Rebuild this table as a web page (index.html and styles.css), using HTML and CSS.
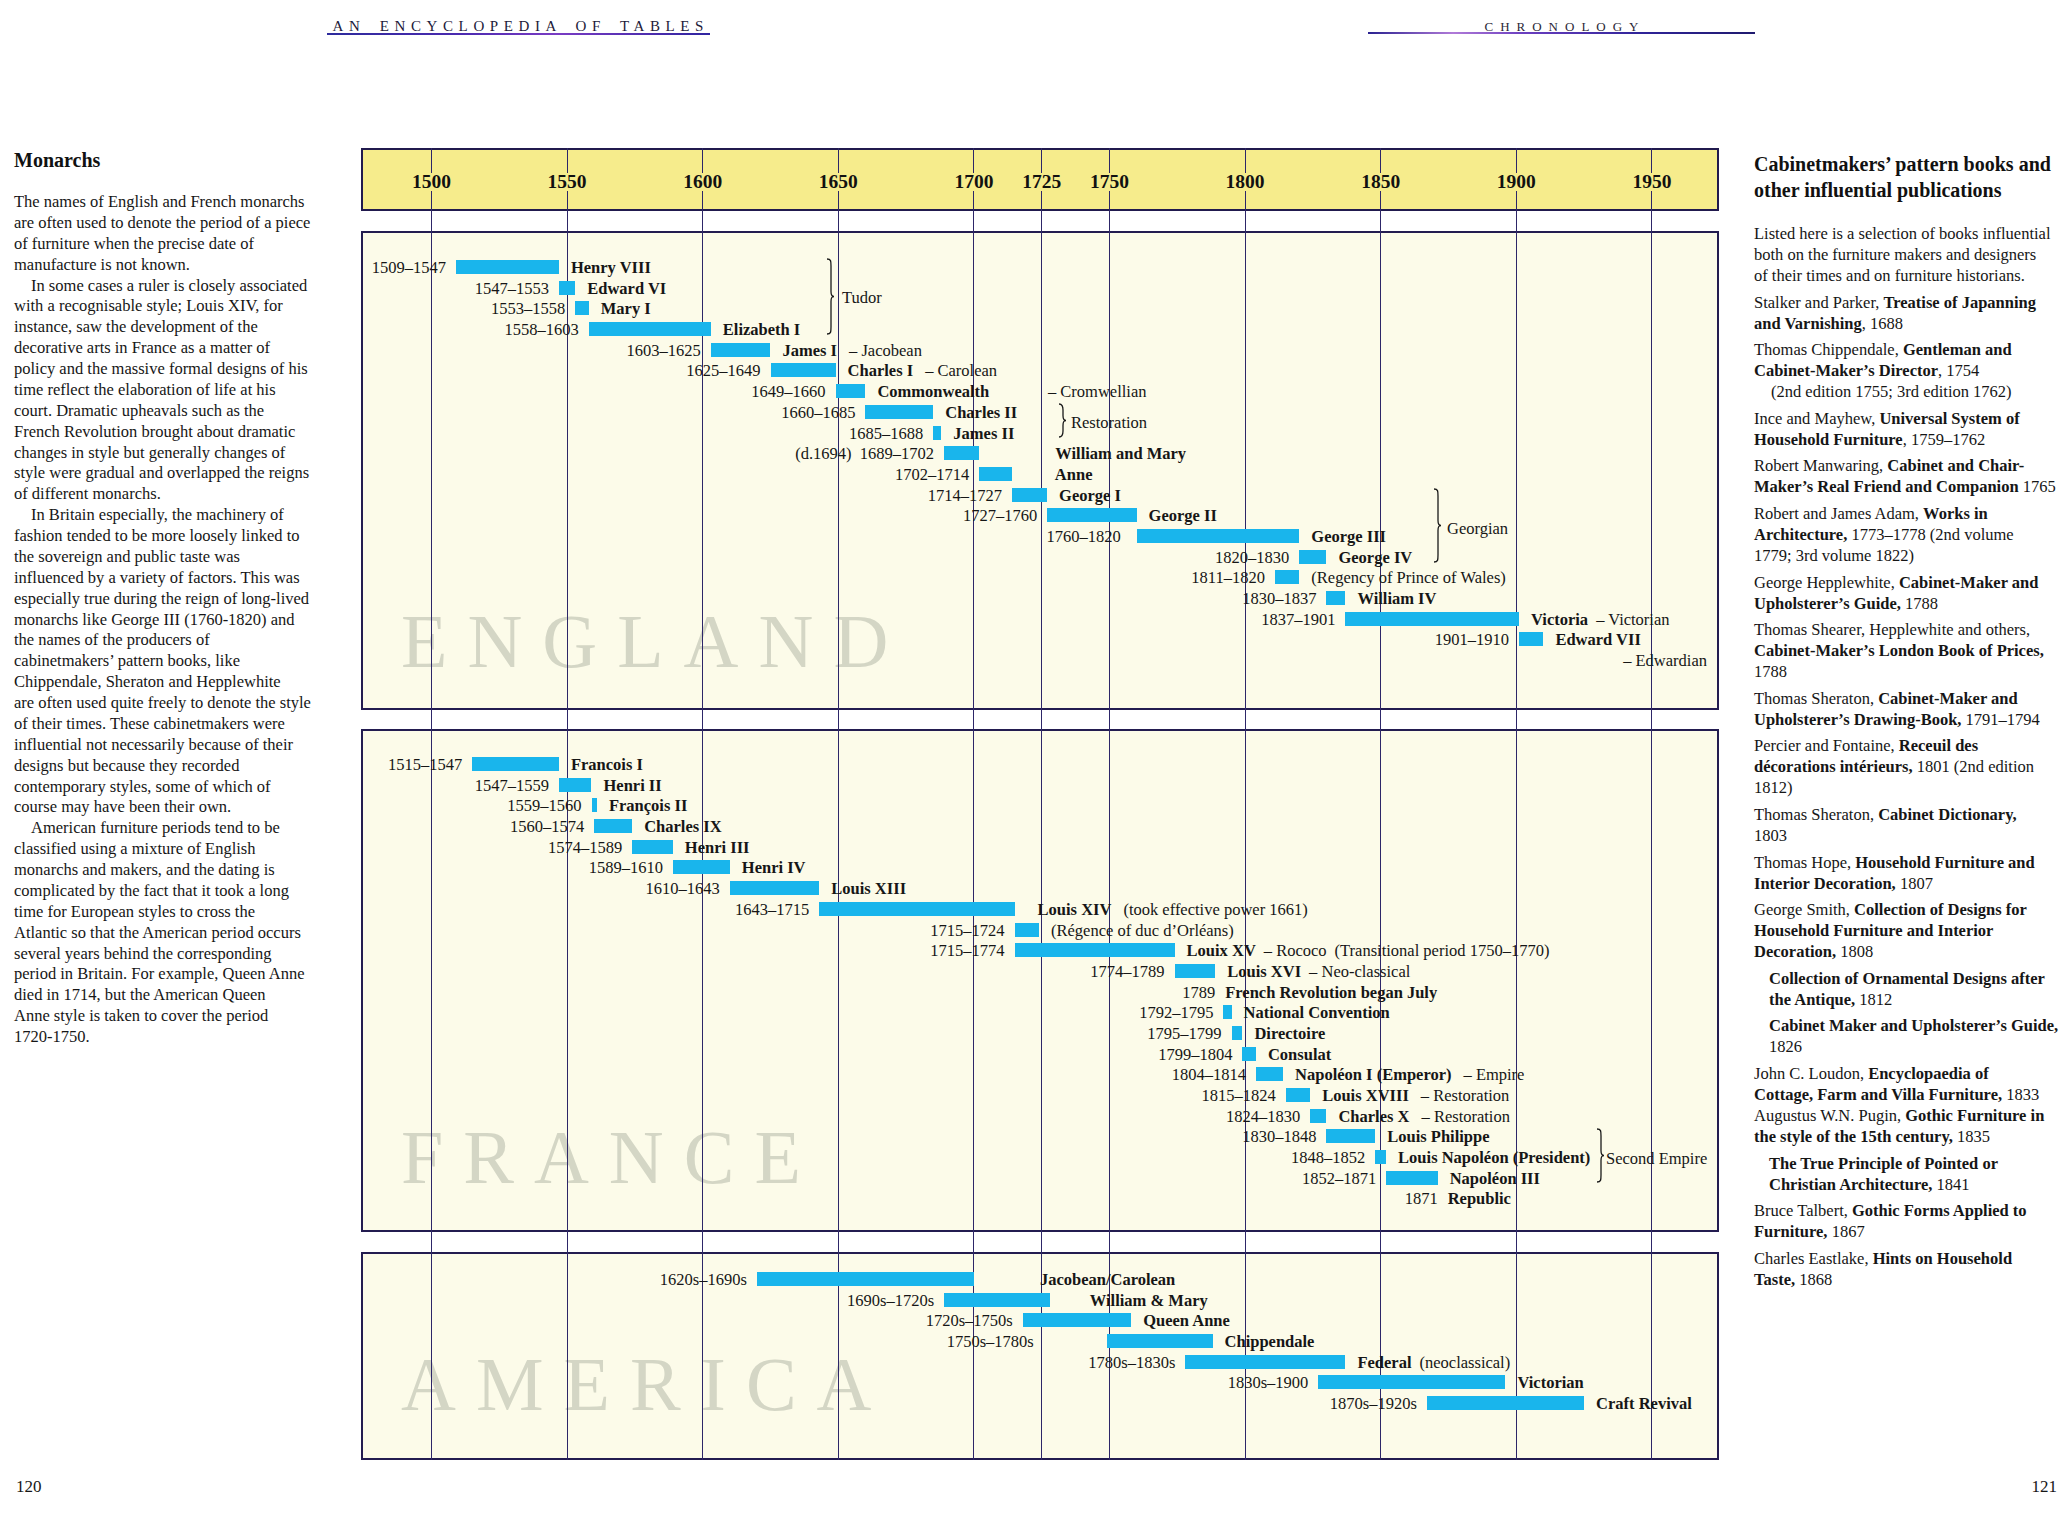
FILE: index.html
```html
<!DOCTYPE html>
<html lang="en">
<head>
<meta charset="utf-8">
<title>An Encyclopedia of Tables – Chronology</title>
<link rel="stylesheet" href="styles.css">
</head>
<body>
<div class="page">
  <header class="running-heads">
    <div class="running-head">
      <span class="running-title">AN ENCYCLOPEDIA OF TABLES</span>
    </div>
    <div class="running-head running-head-right">
      <span class="running-title running-title-right">CHRONOLOGY</span>
    </div>
  </header>

  <main class="spread">
    <aside class="side side-left">
      <h2 class="side-title">Monarchs</h2>
      <div class="side-body">
        <p>The names of English and French monarchs<br>are often used to denote the period of a piece<br>of furniture when the precise date of<br>manufacture is not known.</p>
        <p>In some cases a ruler is closely associated<br>with a recognisable style; Louis XIV, for<br>instance, saw the development of the<br>decorative arts in France as a matter of<br>policy and the massive formal designs of his<br>time reflect the elaboration of life at his<br>court. Dramatic upheavals such as the<br>French Revolution brought about dramatic<br>changes in style but generally changes of<br>style were gradual and overlapped the reigns<br>of different monarchs.</p>
        <p>In Britain especially, the machinery of<br>fashion tended to be more loosely linked to<br>the sovereign and public taste was<br>influenced by a variety of factors. This was<br>especially true during the reign of long-lived<br>monarchs like George III (1760-1820) and<br>the names of the producers of<br>cabinetmakers’ pattern books, like<br>Chippendale, Sheraton and Hepplewhite<br>are often used quite freely to denote the style<br>of their times. These cabinetmakers were<br>influential not necessarily because of their<br>designs but because they recorded<br>contemporary styles, some of which of<br>course may have been their own.</p>
        <p>American furniture periods tend to be<br>classified using a mixture of English<br>monarchs and makers, and the dating is<br>complicated by the fact that it took a long<br>time for European styles to cross the<br>Atlantic so that the American period occurs<br>several years behind the corresponding<br>period in Britain. For example, Queen Anne<br>died in 1714, but the American Queen<br>Anne style is taken to cover the period<br>1720-1750.</p>
      </div>
    </aside>

    <div class="chart">
      <div class="grid" aria-hidden="true">
        <span class="gridline" style="--y:1500"></span>
        <span class="gridline" style="--y:1550"></span>
        <span class="gridline" style="--y:1600"></span>
        <span class="gridline" style="--y:1650"></span>
        <span class="gridline" style="--y:1700"></span>
        <span class="gridline" style="--y:1725"></span>
        <span class="gridline" style="--y:1750"></span>
        <span class="gridline" style="--y:1800"></span>
        <span class="gridline" style="--y:1850"></span>
        <span class="gridline" style="--y:1900"></span>
        <span class="gridline" style="--y:1950"></span>
      </div>

      <div class="axis">
        <span class="axis-label" style="--y:1500">1500</span>
        <span class="axis-label" style="--y:1550">1550</span>
        <span class="axis-label" style="--y:1600">1600</span>
        <span class="axis-label" style="--y:1650">1650</span>
        <span class="axis-label" style="--y:1700">1700</span>
        <span class="axis-label" style="--y:1725">1725</span>
        <span class="axis-label" style="--y:1750">1750</span>
        <span class="axis-label" style="--y:1800">1800</span>
        <span class="axis-label" style="--y:1850">1850</span>
        <span class="axis-label" style="--y:1900">1900</span>
        <span class="axis-label" style="--y:1950">1950</span>
      </div>

      <section class="region region-england">
        <div class="watermark">ENGLAND</div>
        <svg class="brace brace-tudor" width="9" height="77" viewBox="0 0 9 77"><path d="M1,1 C5,1 5,3 5,8 L5,33.5 C5,37.5 6,38.5 8,38.5 C6,38.5 5,39.5 5,43.5 L5,69 C5,74 5,76 1,76"/></svg>
        <span class="group-label label-tudor">Tudor</span>
        <svg class="brace brace-restoration" width="9" height="35" viewBox="0 0 9 35"><path d="M1,1 C4,1 5,3 5,7 L5,12.5 C5,16.5 6,17.5 8,17.5 C6,17.5 5,18.5 5,22.5 L5,28 C5,32 4,34 1,34"/></svg>
        <span class="group-label label-restoration">Restoration</span>
        <svg class="brace brace-georgian" width="9" height="75" viewBox="0 0 9 75"><path d="M1,1 C5,1 5,3 5,8 L5,32.5 C5,36.5 6,37.5 8,37.5 C6,37.5 5,38.5 5,42.5 L5,67 C5,72 5,74 1,74"/></svg>
        <span class="group-label label-georgian">Georgian</span>

        <div class="row" style="--s:1509;--e:1547"><span class="date">1509–1547</span><span class="bar"></span><span class="name">Henry VIII</span></div>
        <div class="row" style="--s:1547;--e:1553"><span class="date">1547–1553</span><span class="bar"></span><span class="name">Edward VI</span></div>
        <div class="row" style="--s:1553;--e:1558"><span class="date">1553–1558</span><span class="bar"></span><span class="name">Mary I</span></div>
        <div class="row" style="--s:1558;--e:1603"><span class="date">1558–1603</span><span class="bar"></span><span class="name">Elizabeth I</span></div>
        <div class="row" style="--s:1603;--e:1625"><span class="date">1603–1625</span><span class="bar"></span><span class="name">James I<span class="note">– Jacobean</span></span></div>
        <div class="row" style="--s:1625;--e:1649"><span class="date">1625–1649</span><span class="bar"></span><span class="name">Charles I<span class="note">– Carolean</span></span></div>
        <div class="row" style="--s:1649;--e:1660"><span class="date">1649–1660</span><span class="bar"></span><span class="name">Commonwealth</span><span class="tag" style="--t:1727.3">– Cromwellian</span></div>
        <div class="row" style="--s:1660;--e:1685"><span class="date">1660–1685</span><span class="bar"></span><span class="name">Charles II</span></div>
        <div class="row" style="--s:1685;--e:1688"><span class="date">1685–1688</span><span class="bar"></span><span class="name">James II</span></div>
        <div class="row" style="--s:1689;--e:1702;--ng:76px"><span class="date">(d.1694)&nbsp; 1689–1702</span><span class="bar"></span><span class="name">William and Mary</span></div>
        <div class="row" style="--s:1702;--e:1714;--ng:43px"><span class="date">1702–1714</span><span class="bar"></span><span class="name">Anne</span></div>
        <div class="row" style="--s:1714;--e:1727"><span class="date">1714–1727</span><span class="bar"></span><span class="name">George I</span></div>
        <div class="row" style="--s:1727;--e:1760"><span class="date">1727–1760</span><span class="bar"></span><span class="name">George II</span></div>
        <div class="row" style="--s:1760;--e:1820;--dg:16px"><span class="date">1760–1820</span><span class="bar"></span><span class="name">George III</span></div>
        <div class="row" style="--s:1820;--e:1830"><span class="date">1820–1830</span><span class="bar"></span><span class="name">George IV</span></div>
        <div class="row" style="--s:1811;--e:1820"><span class="date">1811–1820</span><span class="bar"></span><span class="name plain">(Regency of Prince of Wales)</span></div>
        <div class="row" style="--s:1830;--e:1837"><span class="date">1830–1837</span><span class="bar"></span><span class="name">William IV</span></div>
        <div class="row" style="--s:1837;--e:1901"><span class="date">1837–1901</span><span class="bar"></span><span class="name">Victoria<span class="note note-tight">– Victorian</span></span></div>
        <div class="row" style="--s:1901;--e:1910"><span class="date">1901–1910</span><span class="bar"></span><span class="name">Edward VII</span></div>
        <div class="row"><span class="tag tag-end">– Edwardian</span></div>
      </section>

      <section class="region region-france">
        <div class="watermark">FRANCE</div>
        <svg class="brace brace-empire" width="9" height="55" viewBox="0 0 9 55"><path d="M1,1 C5,1 5,3 5,8 L5,22.5 C5,26.5 6,27.5 8,27.5 C6,27.5 5,28.5 5,32.5 L5,47 C5,52 5,54 1,54"/></svg>
        <span class="group-label label-empire">Second Empire</span>

        <div class="row" style="--s:1515;--e:1547"><span class="date">1515–1547</span><span class="bar"></span><span class="name">Francois I</span></div>
        <div class="row" style="--s:1547;--e:1559"><span class="date">1547–1559</span><span class="bar"></span><span class="name">Henri II</span></div>
        <div class="row" style="--s:1559;--e:1561"><span class="date">1559–1560</span><span class="bar"></span><span class="name">François II</span></div>
        <div class="row" style="--s:1560;--e:1574"><span class="date">1560–1574</span><span class="bar"></span><span class="name">Charles IX</span></div>
        <div class="row" style="--s:1574;--e:1589"><span class="date">1574–1589</span><span class="bar"></span><span class="name">Henri III</span></div>
        <div class="row" style="--s:1589;--e:1610"><span class="date">1589–1610</span><span class="bar"></span><span class="name">Henri IV</span></div>
        <div class="row" style="--s:1610;--e:1643"><span class="date">1610–1643</span><span class="bar"></span><span class="name">Louis XIII</span></div>
        <div class="row" style="--s:1643;--e:1715;--ng:23px"><span class="date">1643–1715</span><span class="bar"></span><span class="name">Louis XIV<span class="note">(took effective power 1661)</span></span></div>
        <div class="row" style="--s:1715;--e:1724"><span class="date">1715–1724</span><span class="bar"></span><span class="name plain">(Régence of duc d’Orléans)</span></div>
        <div class="row" style="--s:1715;--e:1774"><span class="date">1715–1774</span><span class="bar"></span><span class="name">Louix XV<span class="note note-tight">– Rococo</span><span class="note note-tight">(Transitional period 1750–1770)</span></span></div>
        <div class="row" style="--s:1774;--e:1789"><span class="date">1774–1789</span><span class="bar"></span><span class="name">Louis XVI<span class="note note-tight">– Neo-classical</span></span></div>
        <div class="row point" style="--s:1789;--e:1789"><span class="date">1789</span><span class="name">French Revolution began July</span></div>
        <div class="row" style="--s:1792;--e:1795"><span class="date">1792–1795</span><span class="bar"></span><span class="name">National Convention</span></div>
        <div class="row" style="--s:1795;--e:1799"><span class="date">1795–1799</span><span class="bar"></span><span class="name">Directoire</span></div>
        <div class="row" style="--s:1799;--e:1804"><span class="date">1799–1804</span><span class="bar"></span><span class="name">Consulat</span></div>
        <div class="row" style="--s:1804;--e:1814"><span class="date">1804–1814</span><span class="bar"></span><span class="name">Napoléon I (Emperor)<span class="note">– Empire</span></span></div>
        <div class="row" style="--s:1815;--e:1824"><span class="date">1815–1824</span><span class="bar"></span><span class="name">Louis XVIII<span class="note">– Restoration</span></span></div>
        <div class="row" style="--s:1824;--e:1830"><span class="date">1824–1830</span><span class="bar"></span><span class="name">Charles X<span class="note">– Restoration</span></span></div>
        <div class="row" style="--s:1830;--e:1848"><span class="date">1830–1848</span><span class="bar"></span><span class="name">Louis Philippe</span></div>
        <div class="row" style="--s:1848;--e:1852"><span class="date">1848–1852</span><span class="bar"></span><span class="name">Louis Napoléon (President)</span></div>
        <div class="row" style="--s:1852;--e:1871"><span class="date">1852–1871</span><span class="bar"></span><span class="name">Napoléon III</span></div>
        <div class="row point" style="--s:1871;--e:1871"><span class="date">1871</span><span class="name">Republic</span></div>
      </section>

      <section class="region region-america">
        <div class="watermark">AMERICA</div>
        <div class="row" style="--s:1620;--e:1700;--ng:66px"><span class="date">1620s–1690s</span><span class="bar"></span><span class="name">Jacobean/Carolean</span></div>
        <div class="row" style="--s:1689;--e:1728;--ng:40px"><span class="date">1690s–1720s</span><span class="bar"></span><span class="name">William &amp; Mary</span></div>
        <div class="row" style="--s:1718;--e:1758"><span class="date">1720s–1750s</span><span class="bar"></span><span class="name">Queen Anne</span></div>
        <div class="row" style="--s:1749;--e:1788;--dg:73px"><span class="date">1750s–1780s</span><span class="bar"></span><span class="name">Chippendale</span></div>
        <div class="row" style="--s:1778;--e:1837"><span class="date">1780s–1830s</span><span class="bar"></span><span class="name">Federal<span class="note note-tight">(neoclassical)</span></span></div>
        <div class="row" style="--s:1827;--e:1896"><span class="date">1830s–1900</span><span class="bar"></span><span class="name">Victorian</span></div>
        <div class="row" style="--s:1867;--e:1925"><span class="date">1870s–1920s</span><span class="bar"></span><span class="name">Craft Revival</span></div>
      </section>
    </div>

    <aside class="side side-right">
      <h2 class="side-title">Cabinetmakers’ pattern books and<br>other influential publications</h2>
      <div class="refs">
        <p>Listed here is a selection of books influential<br>both on the furniture makers and designers<br>of their times and on furniture historians.</p>
        <p>Stalker and Parker, <b>Treatise of Japanning<br>and Varnishing</b>, 1688</p>
        <p>Thomas Chippendale, <b>Gentleman and<br>Cabinet-Maker’s Director</b>, 1754<br><span class="hang">(2nd edition 1755; 3rd edition 1762)</span></p>
        <p>Ince and Mayhew, <b>Universal System of<br>Household Furniture</b>, 1759–1762</p>
        <p>Robert Manwaring, <b>Cabinet and Chair-<br>Maker’s Real Friend and Companion</b> 1765</p>
        <p>Robert and James Adam, <b>Works in<br>Architecture,</b> 1773–1778 (2nd volume<br>1779; 3rd volume 1822)</p>
        <p>George Hepplewhite, <b>Cabinet-Maker and<br>Upholsterer’s Guide,</b> 1788</p>
        <p>Thomas Shearer, Hepplewhite and others,<br><b>Cabinet-Maker’s London Book of Prices,</b><br>1788</p>
        <p>Thomas Sheraton, <b>Cabinet-Maker and<br>Upholsterer’s Drawing-Book,</b> 1791–1794</p>
        <p>Percier and Fontaine, <b>Receuil des<br>décorations intérieurs,</b> 1801 (2nd edition<br>1812)</p>
        <p>Thomas Sheraton, <b>Cabinet Dictionary,</b><br>1803</p>
        <p>Thomas Hope, <b>Household Furniture and<br>Interior Decoration,</b> 1807</p>
        <p>George Smith, <b>Collection of Designs for<br>Household Furniture and Interior<br>Decoration,</b> 1808</p>
        <p class="indent"><b>Collection of Ornamental Designs after<br>the Antique,</b> 1812</p>
        <p class="indent"><b>Cabinet Maker and Upholsterer’s Guide,</b><br>1826</p>
        <p>John C. Loudon, <b>Encyclopaedia of<br>Cottage, Farm and Villa Furniture,</b> 1833</p>
        <p class="tight">Augustus W.N. Pugin, <b>Gothic Furniture in<br>the style of the 15th century,</b> 1835</p>
        <p class="indent"><b>The True Principle of Pointed or<br>Christian Architecture,</b> 1841</p>
        <p>Bruce Talbert, <b>Gothic Forms Applied to<br>Furniture,</b> 1867</p>
        <p>Charles Eastlake, <b>Hints on Household<br>Taste,</b> 1868</p>
      </div>
    </aside>
  </main>

  <footer class="folios">
    <span class="folio">120</span>
    <span class="folio">121</span>
  </footer>
</div>
</body>
</html>
```

FILE: styles.css
```css
* { box-sizing: border-box; }

html, body {
  margin: 0;
  padding: 0;
  background: #ffffff;
}

body {
  font-family: "Liberation Serif", "Times New Roman", serif;
  color: #161616;
}

.page {
  width: 2072px;
  height: 1514px;
  overflow: hidden;
}

/* ---------- running heads ---------- */
.running-heads {
  display: grid;
  grid-template-columns: 1036px 1036px;
  height: 148px;
}

.running-head {
  display: flex;
  justify-content: center;
  align-items: flex-start;
  padding-top: 19px;
}

.running-head-right {
  padding-left: 15px;
  padding-top: 20px;
}

.running-title {
  position: relative;
  display: block;
  width: 383px;
  text-align: center;
  white-space: nowrap;
  font-size: 15px;
  line-height: 15px;
  letter-spacing: 5.6px;
  word-spacing: 5px;
  padding-left: 5.6px;
  color: #1d1a3a;
}

.running-title::after {
  content: "";
  position: absolute;
  left: 0;
  right: 0;
  bottom: -1px;
  height: 2px;
  background: linear-gradient(90deg, #2d2b9c 0%, #4b2ab0 35%, #7a3cc4 60%, #2f24a0 100%);
}

.running-title-right {
  width: 387px;
  font-size: 13px;
  line-height: 13px;
  letter-spacing: 7px;
  padding-left: 7px;
  color: #2b2838;
}

.running-title-right::after {
  bottom: -1px;
  background: linear-gradient(90deg, #2a2290 0%, #b07ad8 22%, #6b3fc0 40%, #30249a 70%, #1f1a6e 100%);
}

/* ---------- spread ---------- */
.spread {
  display: grid;
  grid-template-columns: 361px 1358px 1fr;
}

.side-title {
  margin: 0;
  font-size: 20px;
  line-height: 25px;
  font-weight: bold;
  color: #111;
}

.side-left {
  padding-left: 14px;
}

.side-body {
  margin-top: 19px;
  font-size: 16.5px;
  line-height: 20.87px;
  white-space: nowrap;
}

.side-body p {
  margin: 0;
}

.side-body p + p {
  text-indent: 17px;
}

.side-right {
  padding-left: 35px;
}

.side-right .side-title {
  margin-top: 3px;
  line-height: 26px;
}

.refs {
  margin-top: 20px;
  font-size: 16.5px;
  line-height: 21px;
  white-space: nowrap;
}

.refs p {
  margin: 5.6px 0 0;
}

.refs p:first-child {
  margin-top: 0;
}

.refs p.tight {
  margin-top: 0;
}

.refs p.indent {
  padding-left: 15px;
}

.refs .hang {
  display: inline-block;
  padding-left: 17px;
}

/* ---------- chart ---------- */
.chart {
  --k: 2.712px;
  --x0: 68.5px;
  position: relative;
  display: flex;
  flex-direction: column;
  gap: 19.5px;
}

.grid {
  position: absolute;
  inset: 0;
  z-index: 1;
  pointer-events: none;
}

.gridline {
  position: absolute;
  top: 0;
  bottom: 0;
  width: 1px;
  background: #2d2668;
  left: calc(70px + (var(--y) - 1500) * var(--k));
}

.axis {
  position: relative;
  height: 63px;
  border: 2px solid #211a4e;
  background: #f6ec8c;
}

.axis-label {
  position: absolute;
  z-index: 2;
  top: 23px;
  left: calc(var(--x0) + (var(--y) - 1500) * var(--k));
  transform: translateX(-50%);
  padding: 0 1px;
  font-size: 19.5px;
  line-height: 18px;
  font-weight: bold;
  color: #111;
  background: #f6ec8c;
}

.region {
  position: relative;
  border: 2px solid #231c50;
  background: #fcfbe9;
}

.region-england { height: 479px; padding-top: 25.5px; }
.region-france  { height: 503px; padding-top: 24px; }
.region-america { height: 208.5px; padding-top: 16.5px; }

.watermark {
  position: absolute;
  left: 38px;
  bottom: 29px;
  font-size: 76px;
  line-height: 76px;
  letter-spacing: 20px;
  color: #d4d6c5;
  white-space: nowrap;
}

.region-france .watermark { bottom: 35px; }
.region-america .watermark { bottom: 36px; }

.row {
  position: relative;
  height: 20.7px;
  font-size: 16.5px;
  line-height: 20.7px;
  white-space: nowrap;
}

.row.point {
  --dg: 0px;
  --ng: 10px;
}

.bar {
  position: absolute;
  z-index: 2;
  top: 2px;
  height: 14px;
  background: #19b5ec;
  left: calc(var(--x0) + (var(--s) - 1500) * var(--k));
  width: calc((var(--e) - var(--s)) * var(--k));
}

.date {
  position: absolute;
  z-index: 2;
  top: 0;
  right: calc(100% - var(--x0) - (var(--s) - 1500) * var(--k) + var(--dg, 10px));
}

.name {
  position: absolute;
  z-index: 2;
  top: 0;
  font-weight: bold;
  left: calc(var(--x0) + (var(--e) - 1500) * var(--k) + var(--ng, 12px));
}

.name.plain {
  font-weight: normal;
}

.note {
  font-weight: normal;
  margin-left: 12px;
}

.note-tight {
  margin-left: 8px;
}

.tag {
  position: absolute;
  z-index: 2;
  top: 0;
  left: calc(var(--x0) + (var(--t) - 1500) * var(--k));
}

.tag-end {
  left: auto;
  right: 10px;
}

.brace {
  position: absolute;
  z-index: 2;
  overflow: visible;
}

.brace path {
  fill: none;
  stroke: #1a1a1a;
  stroke-width: 1.3;
}

.brace-tudor       { left: 463px;  top: 25px; }
.brace-restoration { left: 695px;  top: 170px; }
.brace-georgian    { left: 1070px; top: 255px; }
.brace-empire      { left: 1233px; top: 397px; }

.group-label {
  position: absolute;
  z-index: 2;
  font-size: 16.5px;
  line-height: 20px;
  white-space: nowrap;
}

.label-tudor       { left: 479px;  top: 55px; }
.label-restoration { left: 708px;  top: 180px; }
.label-georgian    { left: 1084px; top: 286px; }
.label-empire      { left: 1243px; top: 418px; }

/* ---------- folios ---------- */
.folios {
  display: flex;
  justify-content: space-between;
  padding: 16px 15px 0 16px;
  font-size: 17px;
  line-height: 22px;
}
```
